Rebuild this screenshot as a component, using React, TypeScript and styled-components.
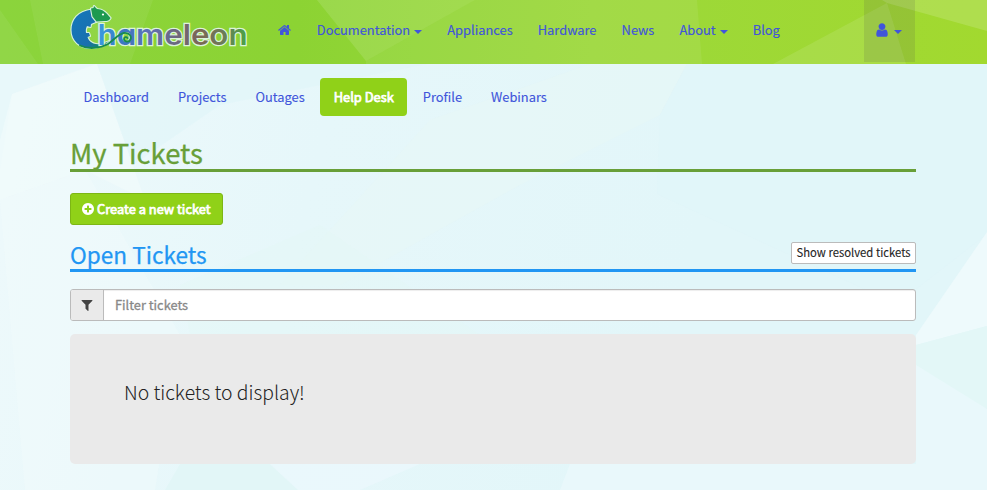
import React from 'react';
import styled, { createGlobalStyle } from 'styled-components';

const Global = createGlobalStyle`
  * { box-sizing: border-box; }
  body { margin: 0; background: #e3f6f9; font-family: "Noto Sans CJK SC", sans-serif; }
`;
const Page = styled.div`
  position: relative;
  z-index: 0;
  width: 987px;
  height: 490px;
  overflow: hidden;
  font-size: 12.85px;
  line-height: 20px;
  color: #222;
`;
const Backdrop = styled.svg`
  position: absolute;
  inset: 0;
  z-index: -1;
`;
const Header = styled.header`
  height: 64px;
  padding: 0 72px 0 70px;
  display: flex;
  align-items: flex-start;
`;
const Logo = styled.svg`
  flex: none;
  width: 180px;
  height: 64px;
`;
const NavList = styled.nav`
  display: flex;
  flex: 1;
  height: 60px;
  padding-left: 15.2px;
`;
const NavLink = styled.a`
  display: flex;
  align-items: center;
  padding: 0 12.55px;
  color: #4055db;
  -webkit-text-stroke: 0.15px currentColor;
  white-space: nowrap;
`;
const Caret = styled.span`
  margin: 3px 0 0 4px;
  border-top: 4px solid currentColor;
  border-left: 4px solid transparent;
  border-right: 4px solid transparent;
`;
const UserMenu = styled(NavLink)`
  width: 51px;
  height: 62px;
  padding: 0 0 2px 10px;
  background: rgba(80, 80, 80, 0.15);
`;
const Icon = styled.svg<{ $size: number }>`
  flex: none;
  width: ${p => p.$size}px;
  height: ${p => p.$size}px;
  fill: currentColor;
`;
const Main = styled.main`
  width: 846px;
  margin-left: 70px;
  padding-top: 14px;
`;
const Tabs = styled.nav`
  display: flex;
  gap: 2px;
  height: 38px;
`;
const Tab = styled.a<{ $active?: boolean }>`
  display: flex;
  align-items: center;
  padding: 0 13.5px 1px;
  border-radius: 4px;
  color: ${p => (p.$active ? '#fff' : '#4055db')};
  background: ${p => (p.$active ? '#90d118' : 'transparent')};
  -webkit-text-stroke: ${p => (p.$active ? 0.75 : 0.12)}px currentColor;
`;
const Title = styled.h1`
  margin: 20px 0 0;
  height: 36px;
  line-height: 32px;
  font-size: 27.4px;
  font-weight: 400;
  color: #689f38;
  -webkit-text-stroke: 0.3px currentColor;
  border-bottom: 3px solid #689f38;
`;
const CreateButton = styled.button`
  display: flex;
  align-items: center;
  gap: 2px;
  width: 153px;
  height: 32px;
  margin-top: 21px;
  padding: 0 10px 2px;
  border: 1px solid #7db615;
  border-radius: 3px;
  background: #90d118;
  color: #fff;
  font: 400 12.87px "Noto Sans CJK SC", sans-serif;
  -webkit-text-stroke: 0.75px currentColor;
  white-space: nowrap;

  ${Icon} {
    margin-top: 2px;
  }
`;
const SectionHead = styled.div`
  display: flex;
  justify-content: space-between;
  height: 31px;
  margin-top: 16px;
  border-bottom: 3px solid #2196f3;
`;
const SectionTitle = styled.h2`
  margin: 0;
  font-size: 22.6px;
  line-height: 27px;
  font-weight: 400;
  color: #2196f3;
  -webkit-text-stroke: 0.25px currentColor;
`;
const SmallButton = styled.button`
  width: 125px;
  height: 22px;
  margin-top: 1px;
  padding: 0 0 2px;
  border: 1px solid #bbb;
  border-radius: 2px;
  background: #fff;
  color: #222;
  font: 400 11.3px/18px "Noto Sans CJK SC", sans-serif;
  -webkit-text-stroke: 0.1px currentColor;
  white-space: nowrap;
`;
const Filter = styled.div`
  display: flex;
  height: 32px;
  margin-top: 17px;
  border: 1px solid #bbb;
  border-radius: 3px;
  background: #fff;
  overflow: hidden;
`;
const FilterIcon = styled.span`
  display: flex;
  align-items: center;
  justify-content: center;
  width: 33px;
  background: #eaeaea;
  border-right: 1px solid #bbb;
  color: #444;
`;
const FilterInput = styled.input`
  flex: 1;
  border: 0;
  padding: 0 11px 2px;
  background: transparent;
  box-shadow: inset 0 1px 1px rgba(0, 0, 0, 0.075);
  font: 400 12.8px "Noto Sans CJK SC", sans-serif;
  &::placeholder { color: #888; opacity: 1; -webkit-text-stroke: 0.3px #888; }
`;
const EmptyPanel = styled.section`
  height: 130px;
  margin-top: 13px;
  padding: 43px 54px;
  border-radius: 5px;
  background: #eaeaea;
`;
const EmptyText = styled.p`
  margin: 0;
  font-size: 19.35px;
  line-height: 30px;
  font-weight: 300;
`;

const paths = {
  home: 'M1408 992v480q0 26-19 45t-45 19h-384v-384h-256v384h-384q-26 0-45-19t-19-45v-480q0-1 .5-3t.5-3l575-474 575 474q1 2 1 6zm223-69l-62 74q-8 9-21 11h-3q-13 0-21-7l-692-577-692 577q-12 8-24 7-13-2-21-11l-62-74q-8-10-7-23.5t11-21.5l719-599q32-26 76-26t76 26l244 204v-195q0-14 9-23t23-9h192q14 0 23 9t9 23v408l219 182q10 8 11 21.5t-7 23.5z',
  user: 'M1536 1399q0 109-62.5 187t-150.5 78h-854q-88 0-150.5-78t-62.5-187q0-85 8.5-160.5t31.5-152 58.5-131 94-89 134.5-34.5q131 128 313 128t313-128q76 0 134.5 34.5t94 89 58.5 131 31.5 152 8.5 160.5zm-256-887q0 159-112.5 271.5t-271.5 112.5-271.5-112.5-112.5-271.5 112.5-271.5 271.5-112.5 271.5 112.5 112.5 271.5z',
  plus: 'M1344 960v-128q0-26-19-45t-45-19h-256v-256q0-26-19-45t-45-19h-128q-26 0-45 19t-19 45v256h-256q-26 0-45 19t-19 45v128q0 26 19 45t45 19h256v256q0 26 19 45t45 19h128q26 0 45-19t19-45v-256h256q26 0 45-19t19-45zm320-64q0 209-103 385.5t-279.5 279.5-385.5 103-385.5-103-279.5-279.5-103-385.5 103-385.5 279.5-279.5 385.5-103 385.5 103 279.5 279.5 103 385.5z',
  filter: 'M1595 295q17 41-14 70l-493 493v742q0 42-39 59-13 5-25 5-27 0-45-19l-256-256q-19-19-19-45v-486l-493-493q-31-29-14-70 17-39 59-39h1280q42 0 59 39z',
};
const Glyph = ({ name, size = 16 }: { name: keyof typeof paths; size?: number }) => (
  <Icon $size={size} viewBox="0 0 1792 1792"><path d={paths[name]} /></Icon>
);

const Facets = () => (
  <Backdrop width="987" height="490" viewBox="0 0 987 490">
    <defs>
      <linearGradient id="bar">
        <stop offset="0" stopColor="#8bd43c" />
        <stop offset="0.3" stopColor="#8cd333" />
        <stop offset="0.6" stopColor="#9bd83a" />
        <stop offset="1" stopColor="#a2d92f" />
      </linearGradient>
      <linearGradient id="sky" x1="0" x2="1" y1="0.4" y2="0.5">
        <stop offset="0" stopColor="#edf9fb" />
        <stop offset="0.3" stopColor="#e6f7fa" />
        <stop offset="0.7" stopColor="#e2f6f9" />
        <stop offset="1" stopColor="#e2f6f9" />
      </linearGradient>
    </defs>
    <path fill="url(#sky)" d="M0 64h987v426H0z" />
    <path fill="#e8f8fa" d="M0 64h95L12 94 0 170z" />
    <path fill="#f2fbfc" opacity=".6" d="M97 64l48 136-60-30L0 200v-60l12-46z" />
    <path fill="#e0f5f9" opacity=".6" d="M97 64h330L220 105l-87 60z" />
    <path fill="#e8f8f6" opacity=".5" d="M430 120l160-56h97l-27 51-140 70-180 100-60 0z" />
    <path fill="#e0f5f9" opacity=".5" d="M687 64h300v170l-90 70-240-110 3-79z" />
    <path fill="#f3fbfd" opacity=".35" d="M0 200l85-30 95 165-25 155H25z" />
    <path fill="#e3f7f6" opacity=".4" d="M180 285l140-60 160 110-290-1z" />
    <path fill="#eefafc" d="M987 232l-71 103v10l71-19z" />
    <path fill="#e3f7f7" d="M916 345l71-19v83l-71-40z" />
    <path fill="#e9f8fb" d="M916 365l71 44v81H560l10-26h346z" />
    <path fill="#e2f6f7" d="M180 464h90l28 26H165z" />
    <path fill="#ebf8fd" opacity=".8" d="M270 464h150l-60 26h-62z" />

    <path fill="url(#bar)" d="M0 0h987v64H0z" />
    <path fill="#fff" opacity=".06" d="M30 0h123l-23 64H43zM0 10l38 54H0z" />
    <path fill="#fff" opacity=".12" d="M317 0h158L366 61z" />
    <path fill="#fff" opacity=".07" d="M475 0h222l5 64H366v-3z" />
    <path fill="#fff" opacity=".1" d="M887 3L773 64h133z" />
    <path fill="#fff" opacity=".15" d="M882 0h105v31L887 3z" />
  </Backdrop>
);

const ChameleonLogo = () => (
  <Logo viewBox="70 0 180 64">
    <defs>
      <linearGradient id="word" gradientUnits="userSpaceOnUse" x1="98" x2="247" y1="0" y2="0">
        <stop offset="0" stopColor="#3a9be0" />
        <stop offset="0.16" stopColor="#3a78c4" />
        <stop offset="0.35" stopColor="#5f70b4" />
        <stop offset="0.52" stopColor="#6c6880" />
        <stop offset="0.68" stopColor="#7c6654" />
        <stop offset="0.84" stopColor="#6c7c58" />
        <stop offset="1" stopColor="#4aa346" />
      </linearGradient>
      <linearGradient id="skin" x1="0" x2="1" y1="0" y2="0.6">
        <stop offset="0" stopColor="#1279bd" />
        <stop offset="0.7" stopColor="#1a6fae" />
        <stop offset="1" stopColor="#158a63" />
      </linearGradient>
    </defs>
    <g stroke="#d8f2dc" strokeWidth="2.2" strokeLinejoin="round" paintOrder="stroke">
      <path fill="url(#skin)" d="M92 9.500C78 11 71.500 20 71.500 30c0 11 8.500 18 19 18 7 0 13-2.500 19-7-8 3.500-14 4-17 2-3-1.500-4.500-4-5-6l2.500-1-1-3-3 0c-.5-3 0-5 1-7l3.500 1 .5-3 7-3z" />
      <path fill="#1e9a50" d="M91 8.500l2.500-.5.500-2 3 3c6 0 9.500 4 13.500 9-1 2.500-3 3-6 3l-8 .5-4-5z" />
    </g>
    <text
      x="97.500" y="45" fill="url(#word)" stroke="#dcf3da" strokeWidth="2.400" paintOrder="stroke"
      fontFamily="Inter, sans-serif" fontSize="28.500" fontWeight="600"
      textLength="150" lengthAdjust="spacingAndGlyphs" style={{ fontFeatureSettings: '"cv11"' }}
    >hameleon</text>
    <path fill="none" stroke="#188a52" strokeWidth="1.800" strokeLinecap="round" d="M80 45.500c8 4 20 3 28-1.500 6-4 10-10 16-11 5-.5 8 3 6.500 6.500-1.500 3-6.500 2.500-6.500-.5 0-2 2.500-2.500 3.500-1" />
    <circle cx="103" cy="14.500" r="1.100" fill="#fff" />
  </Logo>
);

export default function App() {
  return (
    <Page>
      <Global />
      <Facets />
      <Header>
        <ChameleonLogo />
        <NavList>
          <NavLink><Glyph name="home" size={14} /></NavLink>
          <NavLink>Documentation<Caret /></NavLink>
          <NavLink>Appliances</NavLink>
          <NavLink>Hardware</NavLink>
          <NavLink>News</NavLink>
          <NavLink>About<Caret /></NavLink>
          <NavLink>Blog</NavLink>
        </NavList>
        <UserMenu><Glyph name="user" /><Caret /></UserMenu>
      </Header>
      <Main>
        <Tabs>
          <Tab>Dashboard</Tab><Tab>Projects</Tab><Tab>Outages</Tab>
          <Tab $active>Help Desk</Tab><Tab>Profile</Tab><Tab>Webinars</Tab>
        </Tabs>
        <Title>My Tickets</Title>
        <CreateButton><Glyph name="plus" size={14} />Create a new ticket</CreateButton>
        <SectionHead>
          <SectionTitle>Open Tickets</SectionTitle>
          <SmallButton>Show resolved tickets</SmallButton>
        </SectionHead>
        <Filter>
          <FilterIcon><Glyph name="filter" size={14} /></FilterIcon>
          <FilterInput placeholder="Filter tickets" />
        </Filter>
        <EmptyPanel><EmptyText>No tickets to display!</EmptyText></EmptyPanel>
      </Main>
    </Page>
  );
}
